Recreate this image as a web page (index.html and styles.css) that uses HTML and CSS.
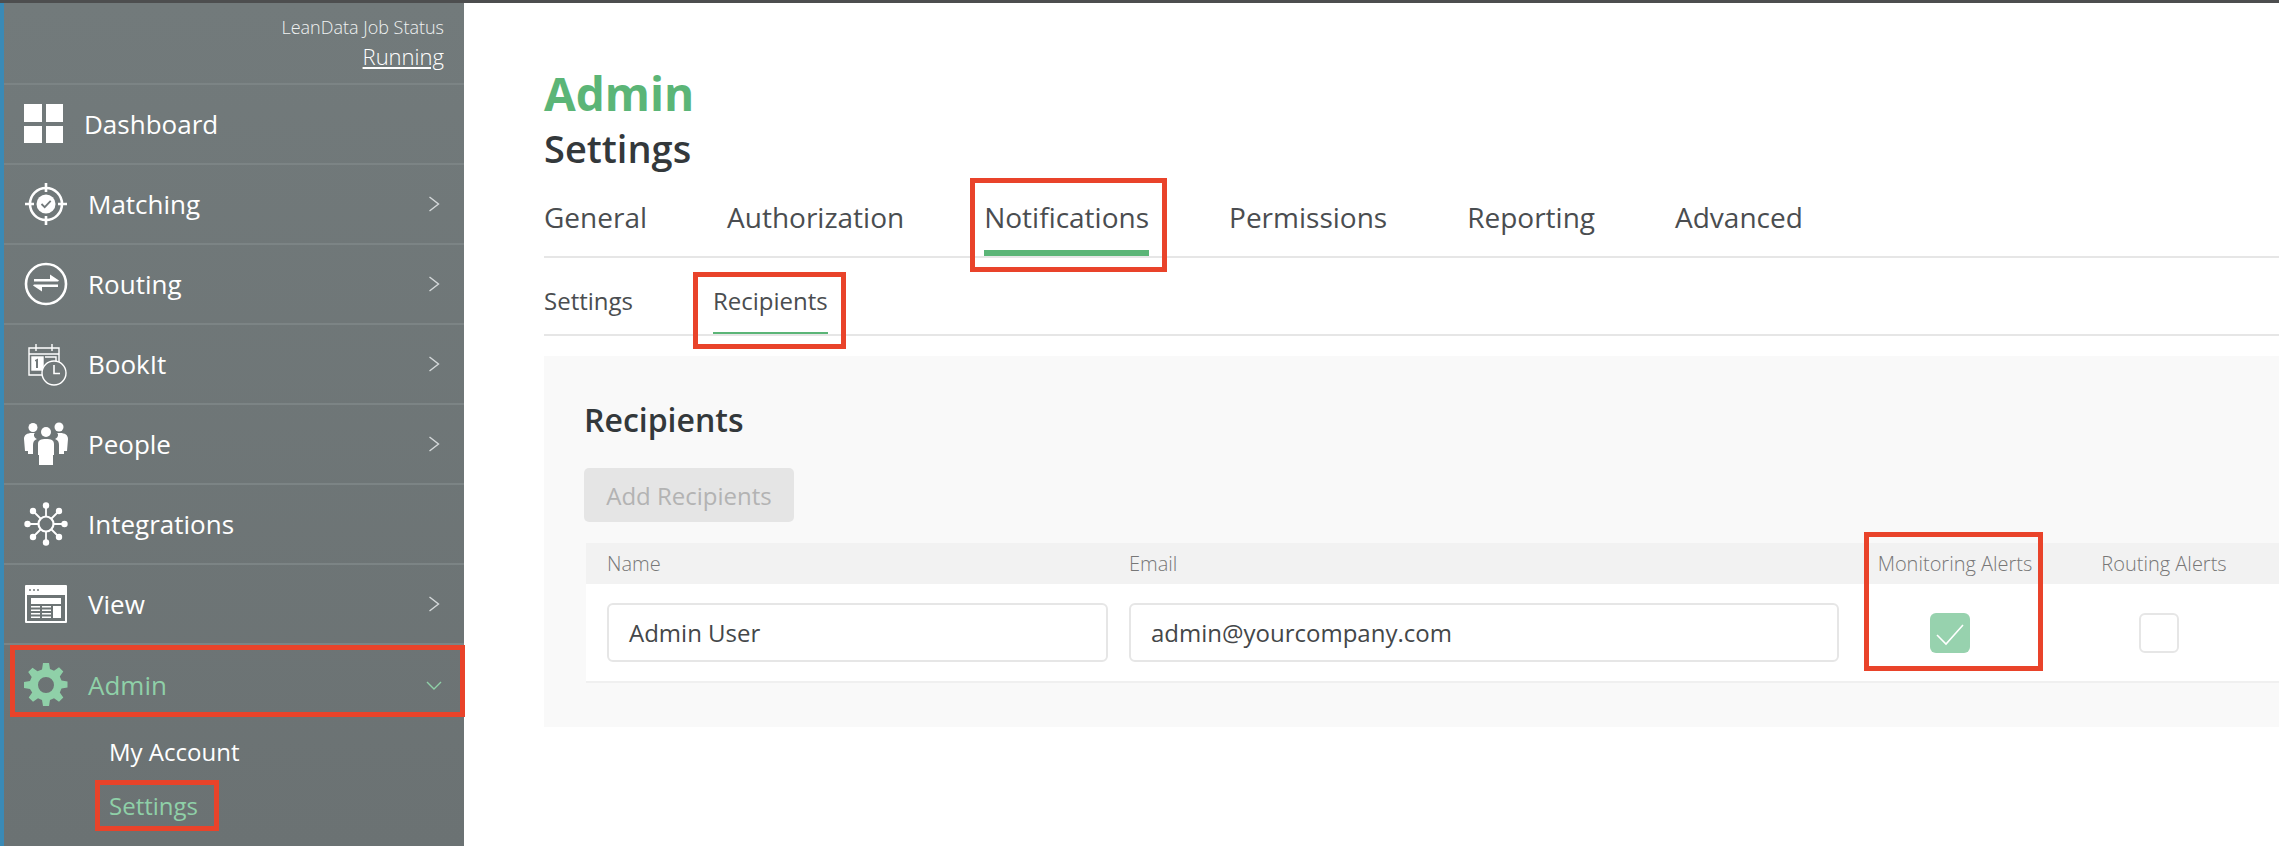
FILE: index.html
```html
<!DOCTYPE html>
<html lang="en">
<head>
<meta charset="utf-8">
<title>Admin Settings</title>
<link rel="stylesheet" href="styles.css">
</head>
<body>
<div class="top-bar"></div>
<div class="app">
  <aside class="sidebar">
    <div class="job-status">
      <div class="job-label">LeanData Job Status</div>
      <a class="job-value">Running</a>
    </div>
    <nav>
      <a class="nav-item">
        <svg class="nav-icon" viewBox="0 0 44 44"><path fill="#fff" d="M0 2h18v18H0zM22 2h17v18H22zM0 24h18v17H0zM22 24h17v17H22z"/></svg>
        <span class="nav-label nav-label-tight">Dashboard</span>
      </a>
      <a class="nav-item">
        <svg class="nav-icon" viewBox="0 0 44 44"><g fill="none" stroke="#fff"><circle cx="22" cy="22" r="16" stroke-width="2.6"/><path stroke-width="2.6" d="M22 1v9M22 34v9M1 22h9M34 22h9"/></g><circle cx="22" cy="22" r="9.5" fill="#fff"/><path fill="none" stroke="#72797a" stroke-width="1.8" d="M17.5 22l3.2 3.2 6-6.4"/></svg>
        <span class="nav-label">Matching</span>
        <svg class="chev" viewBox="0 0 12 16"><path d="M1.5 1l9 7-9 7"/></svg>
      </a>
      <a class="nav-item">
        <svg class="nav-icon" viewBox="0 0 44 44"><circle cx="22" cy="22" r="20" fill="none" stroke="#fff" stroke-width="2.6"/><path fill="#fff" d="M10 17h16v-4.500l9 6-1 .9H10zM34 25H18v4.500l-9-6 1-.9h24z"/></svg>
        <span class="nav-label">Routing</span>
        <svg class="chev" viewBox="0 0 12 16"><path d="M1.5 1l9 7-9 7"/></svg>
      </a>
      <a class="nav-item">
        <svg class="nav-icon" viewBox="0 0 44 44"><g fill="none" stroke="#fff" stroke-width="1.4"><path d="M21 33H5V6h30v16"/><path d="M5 12h30M12 2v7M28 2v7"/><rect x="8" y="15" width="11" height="13" fill="#fff"/><path d="M21 15h11v7"/><circle cx="30" cy="31" r="12" fill="#72797a"/><path d="M30 23v8.500h6" stroke-width="1.6"/></g><path fill="#72797a" d="M11 18l3-1.500V26h-2v-7l-1 .5z"/></svg>
        <span class="nav-label">BookIt</span>
        <svg class="chev" viewBox="0 0 12 16"><path d="M1.5 1l9 7-9 7"/></svg>
      </a>
      <a class="nav-item">
        <svg class="nav-icon" viewBox="0 0 44 44"><g fill="#fff"><circle cx="9" cy="5.500" r="4.500"/><circle cx="35" cy="5" r="4.500"/><circle cx="22" cy="10" r="5"/><path d="M0 17c0-4 3-6 8-6h3c-2 1-1 5 2 6-3 1-4 3-4 6v9H4v-3H1zM44 17c0-4-3-6-8-6h-3c2 1 1 5-2 6 3 1 4 3 4 6v9h5v-3h3z"/><path d="M14 22c0-4 3-5 8-5s8 1 8 5v11h-1v10H15V33h-1z"/></g></svg>
        <span class="nav-label">People</span>
        <svg class="chev" viewBox="0 0 12 16"><path d="M1.5 1l9 7-9 7"/></svg>
      </a>
      <a class="nav-item">
        <svg class="nav-icon" viewBox="0 0 44 44"><g stroke="#fff" stroke-width="1.8" fill="none"><circle cx="22" cy="22" r="7.500" stroke-width="2.200"/><path d="M22 4v10M22 30v10M4 22h10M30 22h10M9 9l8 8M27 27l8 8M35 9l-8 8M17 27l-8 8"/></g><g fill="#fff"><circle cx="22" cy="3.500" r="3.200"/><circle cx="22" cy="40.500" r="3.200"/><circle cx="3.500" cy="22" r="3.200"/><circle cx="40.500" cy="22" r="3.200"/><circle cx="9" cy="9" r="3.200"/><circle cx="35" cy="9" r="3.200"/><circle cx="9" cy="35" r="3.200"/><circle cx="35" cy="35" r="3.200"/></g></svg>
        <span class="nav-label">Integrations</span>
      </a>
      <a class="nav-item">
        <svg class="nav-icon" viewBox="0 0 44 44"><path fill="#fff" fill-rule="evenodd" d="M2 3h40a1 1 0 0 1 1 1v36a1 1 0 0 1-1 1H2a1 1 0 0 1-1-1V4a1 1 0 0 1 1-1zM3 13v26h38V13z"/><g fill="#72797a"><circle cx="6" cy="8" r="1"/><circle cx="10" cy="8" r="1"/><circle cx="14" cy="8" r="1"/></g><path fill="#fff" d="M7 16h30v6H7zM7 24h9v1.500H7zM7 27.500h9V29H7zM7 31h9v1.500H7zM7 34.500h9V36H7zM18 24h9v1.500h-9zM18 27.500h9V29h-9zM18 31h9v1.500h-9zM18 34.500h9V36h-9zM29 24h8v12h-8z"/></svg>
        <span class="nav-label">View</span>
        <svg class="chev" viewBox="0 0 12 16"><path d="M1.5 1l9 7-9 7"/></svg>
      </a>
      <a class="nav-item nav-active">
        <svg class="nav-icon" viewBox="0 0 44 44"><path fill="#8fd0a8" fill-rule="evenodd" d="M19 0h6l1 6 4 1.700 5-3.500 4.300 4.300-3.500 5 1.700 4 6 1v6l-6 1-1.700 4 3.500 5-4.300 4.300-5-3.500-4 1.700-1 6h-6l-1-6-4-1.700-5 3.500-4.300-4.300 3.500-5L6 26l-6-1v-6l6-1 1.700-4-3.500-5L8.500 4.700l5 3.500L18 6.500zM22 14a8 8 0 1 0 0 16 8 8 0 0 0 0-16z"/></svg>
        <span class="nav-label">Admin</span>
        <svg class="chev chev-down" viewBox="0 0 16 9"><path d="M1 1l7 7 7-7"/></svg>
      </a>
    </nav>
    <div class="subnav">
      <a class="sub-item">My Account</a>
      <a class="sub-item sub-active">Settings</a>
    </div>
  </aside>
  <main class="content">
    <h1 class="title">Admin</h1>
    <h2 class="subtitle">Settings</h2>
    <div class="tabs">
      <a class="tab">General</a>
      <a class="tab">Authorization</a>
      <a class="tab tab-active">Notifications</a>
      <a class="tab">Permissions</a>
      <a class="tab">Reporting</a>
      <a class="tab">Advanced</a>
    </div>
    <div class="subtabs">
      <a class="subtab">Settings</a>
      <a class="subtab subtab-active">Recipients</a>
    </div>
    <section class="panel">
      <h3 class="panel-title">Recipients</h3>
      <button class="add-btn" type="button">Add Recipients</button>
      <div class="grid grid-head">
        <div>Name</div>
        <div>Email</div>
        <div class="col-center">Monitoring Alerts</div>
        <div class="col-center">Routing Alerts</div>
      </div>
      <div class="grid grid-row">
        <div class="field">Admin User</div>
        <div class="field">admin@yourcompany.com</div>
        <div class="check check-on"><svg viewBox="0 0 40 40"><path d="M7 22l9 9 17-19"/></svg></div>
        <div class="check"></div>
      </div>
    </section>
  </main>
</div>
<div class="mark mark-admin"></div>
<div class="mark mark-settings"></div>
<div class="mark mark-notifications"></div>
<div class="mark mark-recipients"></div>
<div class="mark mark-monitoring"></div>
</body>
</html>
```
FILE: styles.css
```css
* { box-sizing: border-box; }
html, body { margin: 0; height: 846px; overflow: hidden; background: #fff; }
body { font-family: "Open Sans", "Noto Sans", sans-serif; position: relative; }
.top-bar { height: 3px; background: #4d4e4f; }
.app { display: flex; height: 843px; }

.sidebar { width: 464px; flex: none; background: linear-gradient(#727a7b, #6b7273); border-left: 4px solid #3a8ab6; color: #fff; }
.job-status { height: 82px; padding: 10px 20px 0 0; text-align: right; border-bottom: 2px solid #7c8485; }
.job-label { font-size: 18px; font-weight: 300; line-height: 28px; color: #f0f2f2; }
.job-value { font-size: 22px; font-weight: 300; line-height: 30px; text-decoration: underline; }
.nav-item { display: flex; align-items: center; height: 80px; padding: 0 24px 0 20px; border-bottom: 2px solid #7c8485; position: relative; }
.nav-icon { width: 44px; height: 44px; flex: none; }
.nav-label { margin-left: 20px; font-size: 26px; line-height: 36px; color: #fff; }
.nav-label-tight { margin-left: 16px; }
.chev { width: 12px; height: 16px; margin-left: auto; fill: none; stroke: #d5d9da; stroke-width: 1.4; }
.chev-down { width: 16px; height: 9px; margin-right: -2px; stroke: #8fd0a8; }
.nav-active { border-bottom: 0; }
.nav-active .nav-label { color: #8fd0a8; }
.subnav { padding: 0 0 0 105px; display: flex; flex-direction: column; }
.sub-item { font-size: 24px; line-height: 54px; color: #fff; }
.sub-active { color: #8fd0a8; }

.content { flex: 1; min-width: 0; padding-left: 80px; }
.title { margin: 61px 0 0; font-size: 46px; line-height: 58px; font-weight: 700; color: #5bb577; }
.subtitle { margin: 0; font-size: 38px; line-height: 52px; font-weight: 600; color: #33383b; }
.tabs { display: flex; gap: 80px; height: 79px; margin-top: 5px; border-bottom: 2px solid #e6e6e6; padding-top: 18px; }
.tab { font-size: 28px; line-height: 40px; height: 59px; color: #4a4d50; }
.tab-active { border-bottom: 6px solid #5bb577; }
.subtabs { display: flex; gap: 80px; height: 78px; border-bottom: 2px solid #e6e6e6; padding-top: 25px; }
.subtab { font-size: 24px; line-height: 36px; height: 51px; color: #4a4d50; }
.subtab-active { border-bottom: 2px solid #5bb577; }

.panel { margin-top: 20px; height: 371px; padding: 44px 0 0 40px; background: #f9f9f9; }
.panel-title { margin: 0; font-size: 32px; line-height: 40px; font-weight: 600; color: #33383b; }
.add-btn { display: block; margin: 28px 0 0; width: 210px; height: 54px; border: 0; border-radius: 5px; background: #e5e5e5; color: #b3b3b3; font: 24px "Open Sans", sans-serif; }
.grid { display: grid; grid-template-columns: 501px 710px 190px 186px; column-gap: 21px; padding-left: 21px; margin-left: 2px; }
.grid-head { height: 41px; margin-top: 21px; align-items: center; background: #f2f2f2; font-size: 20px; font-weight: 300; color: #777; }
.col-center { text-align: center; white-space: nowrap; }
.grid-row { height: 99px; align-items: center; background: #fff; border-bottom: 2px solid #f0f0f0; }
.field { height: 59px; border: 2px solid #e6e6e6; border-radius: 6px; padding-left: 20px; font-size: 24px; line-height: 55px; color: #444749; }
.check { justify-self: center; margin-right: 10px; width: 40px; height: 40px; border: 2px solid #e6e6e6; border-radius: 6px; background: #fff; }
.check-on { border: 0; background: #97d2ae; }
.check-on svg { display: block; width: 40px; height: 40px; fill: none; stroke: #fff; stroke-width: 1.6; }

.mark { position: absolute; border: 5px solid #e9432a; pointer-events: none; }
.mark-admin { left: 10px; top: 645px; width: 455px; height: 72px; }
.mark-settings { left: 95px; top: 780px; width: 124px; height: 51px; }
.mark-notifications { left: 970px; top: 178px; width: 197px; height: 94px; }
.mark-recipients { left: 693px; top: 272px; width: 153px; height: 77px; }
.mark-monitoring { left: 1864px; top: 532px; width: 179px; height: 139px; }
```
